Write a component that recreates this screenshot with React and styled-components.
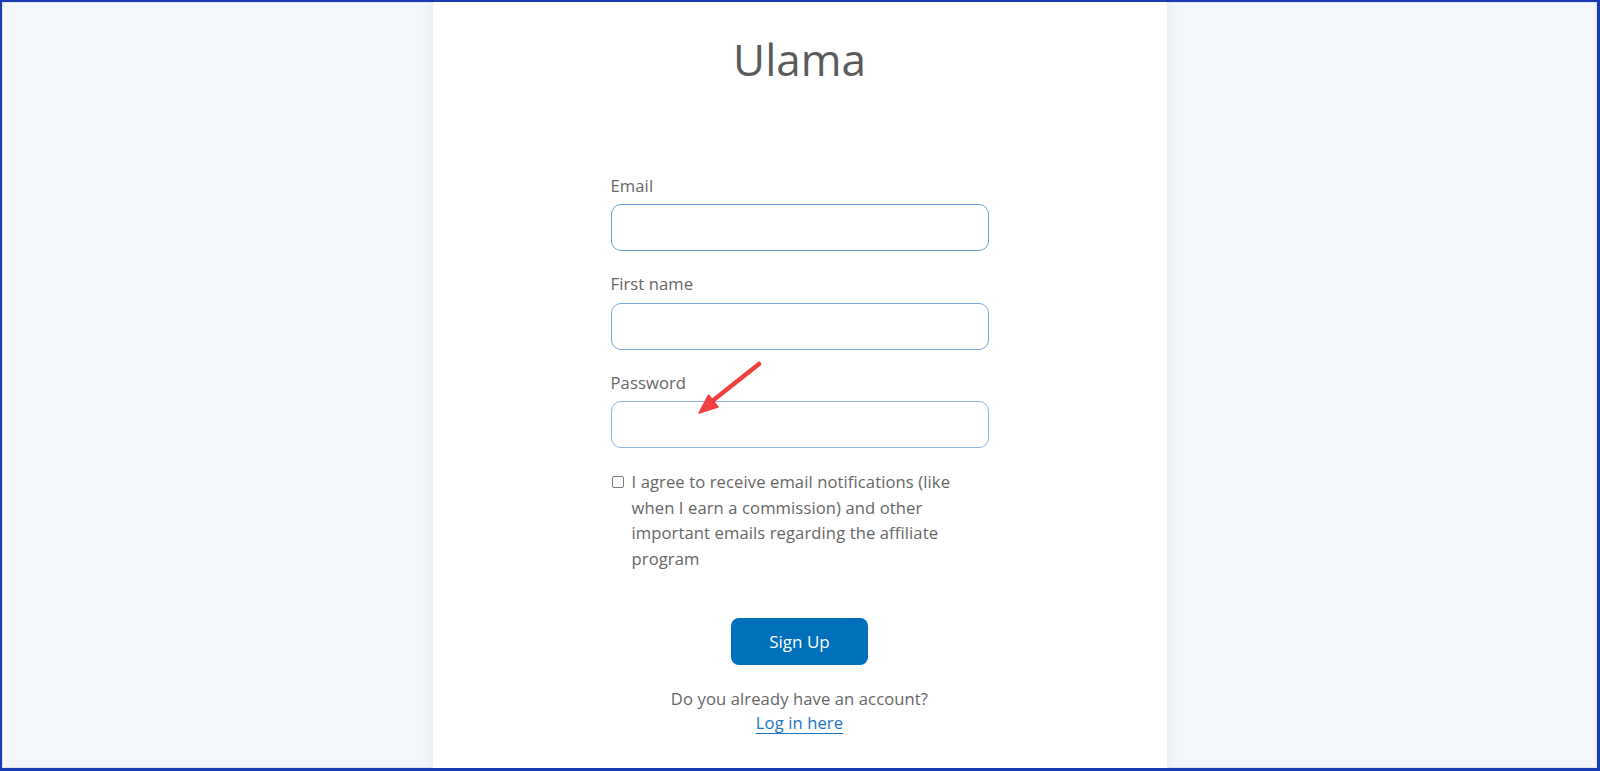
import React from "react";
import styled, { createGlobalStyle } from "styled-components";

const GlobalStyle = createGlobalStyle`
  html, body {
    margin: 0;
    padding: 0;
    background: #f3f6fa;
  }
  body {
    font-family: "Open Sans", "Noto Sans", "Liberation Sans", sans-serif;
    color: #666666;
  }
  * { box-sizing: border-box; }
`;

const Frame = styled.div`
  position: relative;
  width: 1600px;
  height: 771px;
  border-style: solid;
  border-color: #1b3bb5;
  border-width: 2px 3px 3px 2px;
  box-shadow: inset 0 0 0 1px #dfe5ef;
  background: #f3f6fa;
  display: flex;
  justify-content: center;
  overflow: hidden;
`;

const Card = styled.main`
  width: 734px;
  height: 100%;
  background: #ffffff;
  box-shadow: 0 0 16px rgba(40, 60, 90, 0.07);
  display: flex;
  flex-direction: column;
  align-items: center;
  padding-top: 31px;
`;

const Title = styled.h1`
  margin: 0;
  font-size: 44px;
  line-height: 52.8px;
  font-weight: 400;
  color: #5b5b5b;
`;

const Form = styled.form`
  width: 378px;
  margin-top: 88px;
  display: flex;
  flex-direction: column;
`;

const Field = styled.div`
  display: flex;
  flex-direction: column;
  margin-bottom: 21px;
`;

const Text = `
  font-size: 16.6px;
  letter-spacing: 0.1px;
  color: #666666;
`;

const Label = styled.label`
  ${Text}
  line-height: 24px;
  margin-bottom: 6.5px;
`;

const Input = styled.input`
  height: 47px;
  width: 100%;
  border: 1px solid ${(p) => p.$border || "#7eaadb"};
  border-radius: 10px;
  background: #ffffff;
  padding: 0 14px;
  font-family: inherit;
  font-size: 16px;
  outline: none;
`;

const CheckRow = styled.div`
  display: flex;
  align-items: flex-start;
  gap: 8px;
`;

const Check = styled.input`
  appearance: none;
  -webkit-appearance: none;
  width: 12px;
  height: 12px;
  flex: 0 0 12px;
  margin: 7px 0 0 1px;
  border: 1px solid #7a7a7a;
  border-radius: 2px;
  background: #ffffff;
`;

const CheckText = styled.label`
  ${Text}
  line-height: 25.6px;
`;

const Button = styled.button`
  align-self: center;
  margin-top: 46px;
  width: 137px;
  height: 47px;
  border: none;
  border-radius: 8px;
  background: #0070bd;
  color: #ffffff;
  font-family: inherit;
  font-size: 17px;
  font-weight: 500;
  cursor: pointer;
`;

const Footer = styled.div`
  ${Text}
  margin-top: 22px;
  display: flex;
  flex-direction: column;
  align-items: center;
  line-height: 24.5px;
`;

const Link = styled.a`
  color: #1a74c3;
  text-decoration: underline;
  text-underline-offset: 4px;
  text-decoration-thickness: 1px;
  cursor: pointer;
`;

const Annotation = styled.svg`
  position: absolute;
  left: 0;
  top: 0;
  pointer-events: none;
`;

function Arrow() {
  return (
    <Annotation width="1600" height="771" viewBox="0 0 1600 771">
      <line
        x1="757"
        y1="362"
        x2="709"
        y2="400"
        stroke="#f04040"
        strokeWidth="4.5"
        strokeLinecap="round"
      />
      <polygon points="697,411 706.5,393 716,405" fill="#f04040" stroke="#f04040" strokeWidth="1.5" strokeLinejoin="round" />
    </Annotation>
  );
}

export default function App() {
  return (
    <>
      <GlobalStyle />
      <Frame>
        <Card>
          <Title>Ulama</Title>
          <Form onSubmit={(e) => e.preventDefault()}>
            <Field>
              <Label htmlFor="email">Email</Label>
              <Input id="email" type="email" $border="#6a9fd8" />
            </Field>
            <Field>
              <Label htmlFor="fname">First name</Label>
              <Input id="fname" type="text" $border="#79a8dc" />
            </Field>
            <Field>
              <Label htmlFor="pwd">Password</Label>
              <Input id="pwd" type="password" $border="#8db4de" />
            </Field>
            <CheckRow>
              <Check id="agree" type="checkbox" />
              <CheckText htmlFor="agree">
                I agree to receive email notifications (like when I earn a
                commission) and other important emails regarding the affiliate
                program
              </CheckText>
            </CheckRow>
            <Button type="submit">Sign Up</Button>
            <Footer>
              <span>Do you already have an account?</span>
              <Link>Log in here</Link>
            </Footer>
          </Form>
        </Card>
        <Arrow />
      </Frame>
    </>
  );
}
